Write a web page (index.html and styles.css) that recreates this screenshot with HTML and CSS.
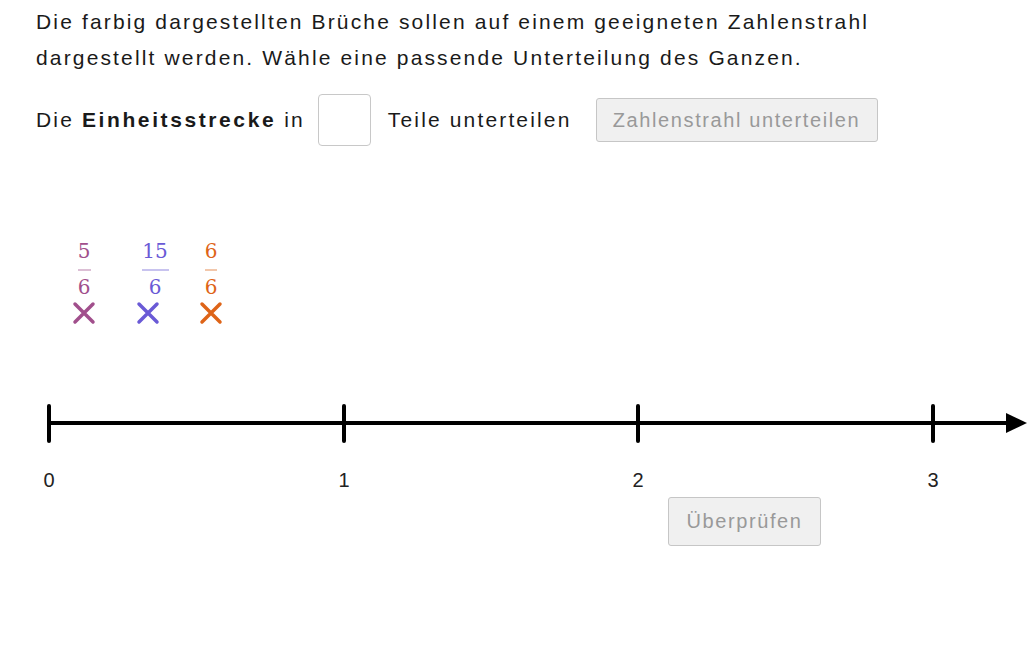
FILE: index.html
```html
<!DOCTYPE html>
<html lang="de">

<head>
    <meta charset="UTF-8">
    <meta name="viewport" content="width=device-width, initial-scale=1.0">
    <title>Zahlenstrahl</title>
    <link rel="stylesheet" href="styles.css">
</head>

<body>

    <p class="task">
        Die farbig dargestellten Brüche sollen auf einem geeigneten Zahlenstrahl<br>
        dargestellt werden. Wähle eine passende Unterteilung des Ganzen.
    </p>

    <div class="controls">
        <span>Die <b>Einheitsstrecke</b> in</span>
        <input class="parts" type="text">
        <span>Teile unterteilen</span>
        <button class="btn split" disabled>Zahlenstrahl unterteilen</button>
    </div>

    <div class="stage">
        <svg class="board" width="1032" height="495" viewBox="0 150 1032 495">
            <!-- Brüche -->
            <g class="fraction" fill="#a14f8c" stroke="#a14f8c">
                <text x="84" y="258">5</text>
                <line x1="78" y1="270" x2="91" y2="270" stroke-width="1.2" opacity="0.6" />
                <text x="84" y="294">6</text>
                <path d="M75 304 L93 322 M93 304 L75 322" stroke-width="3.5" stroke-linecap="round" />
            </g>
            <g class="fraction" fill="#6a5ad6" stroke="#6a5ad6">
                <text x="155" y="258">15</text>
                <line x1="142" y1="270" x2="169" y2="270" stroke-width="1.2" opacity="0.6" />
                <text x="155" y="294">6</text>
                <path d="M139 304 L157 322 M157 304 L139 322" stroke-width="3.5" stroke-linecap="round" />
            </g>
            <g class="fraction" fill="#de6418" stroke="#de6418">
                <text x="211" y="258">6</text>
                <line x1="205" y1="270" x2="217" y2="270" stroke-width="1.2" opacity="0.6" />
                <text x="211" y="294">6</text>
                <path d="M202 304 L220 322 M220 304 L202 322" stroke-width="3.5" stroke-linecap="round" />
            </g>

            <!-- Zahlenstrahl -->
            <g stroke="#000" stroke-width="4" stroke-linecap="round">
                <line x1="49" y1="423" x2="1010" y2="423" />
                <line x1="49" y1="406" x2="49" y2="441" />
                <line x1="344" y1="406" x2="344" y2="441" />
                <line x1="638" y1="406" x2="638" y2="441" />
                <line x1="933" y1="406" x2="933" y2="441" />
            </g>
            <polygon points="1006,413 1027,423 1006,433" fill="#000" />

            <g class="labels">
                <text x="49" y="487">0</text>
                <text x="344" y="487">1</text>
                <text x="638" y="487">2</text>
                <text x="933" y="487">3</text>
            </g>
        </svg>
        <button class="btn check" disabled>Überprüfen</button>
    </div>

</body>

</html>
```

FILE: styles.css
```css
body {
    margin: 0;
    width: 1032px;
    height: 645px;
    overflow: hidden;
    background: white;
    font-family: "Liberation Sans", "DejaVu Sans", sans-serif;
    font-size: 21px;
    letter-spacing: 2.15px;
    color: #1a1a1a;
}

.task {
    margin: 0;
    padding: 4px 0 0 36px;
    line-height: 36px;
}

.controls {
    display: flex;
    align-items: center;
    margin-top: 17px;
    padding-left: 36px;
    height: 54px;
}

.controls b {
    font-weight: bold;
    letter-spacing: 2.6px;
}

.parts {
    box-sizing: border-box;
    width: 53px;
    height: 52px;
    margin: 0 17px 0 13px;
    border: 1px solid #c8c8c8;
    border-radius: 4px;
    font-size: 20px;
}

.btn {
    box-sizing: border-box;
    background: #f0f0f0;
    border: 1px solid #c6c6c6;
    border-radius: 3px;
    color: #999;
    font-family: inherit;
    font-size: 20px;
    letter-spacing: 1.6px;
}

.split {
    width: 282px;
    height: 44px;
    margin-left: 24px;
}

.stage {
    position: relative;
    height: 495px;
    margin-top: 3px;
}

.board {
    display: block;
}

.fraction text {
    font-family: "DejaVu Serif", "Liberation Serif", serif;
    font-size: 20px;
    letter-spacing: 0;
    stroke: none;
    text-anchor: middle;
}

.labels text {
    font-family: "Liberation Sans", sans-serif;
    font-size: 20px;
    letter-spacing: 0;
    fill: #222;
    text-anchor: middle;
}

.check {
    position: absolute;
    left: 668px;
    top: 347px;
    width: 153px;
    height: 49px;
}
```
